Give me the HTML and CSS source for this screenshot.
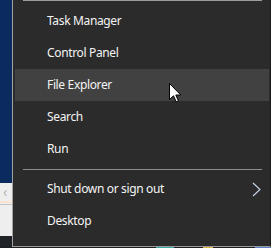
FILE: index.html
```html
<!DOCTYPE html>
<html lang="en">
<head>
    <meta charset="UTF-8">
    <title>Quick Link menu</title>
    <link rel="stylesheet" href="styles.css">
</head>
<body>
    <div class="screen">
        <!-- Bout de bureau visible à gauche -->
        <div class="side">
            <div class="side-blue"></div>
            <div class="side-window">
                <span class="side-arrow">&lsaquo;</span>
                <div class="side-line"></div>
                <div class="side-rule"></div>
            </div>
            <div class="side-taskbar"></div>
        </div>

        <!-- Menu Win+X -->
        <div class="menu">
            <div class="separator top"></div>
            <ul class="group">
                <li class="item">Task Manager</li>
                <li class="item">Control Panel</li>
                <li class="item active">File Explorer</li>
                <li class="item">Search</li>
                <li class="item">Run</li>
            </ul>
            <div class="separator mid"></div>
            <ul class="group">
                <li class="item submenu">
                    Shut down or sign out
                    <svg class="chevron" viewBox="0 0 9 15" fill="none" stroke="currentColor" stroke-width="1.1">
                        <polyline points="1,1 8,7.5 1,14"></polyline>
                    </svg>
                </li>
                <li class="item">Desktop</li>
            </ul>

            <!-- Curseur de la souris -->
            <svg class="cursor" viewBox="0 0 13 20" width="13" height="20">
                <path d="M0.5 0.5 L0.5 16.5 L4.5 12.8 L7.2 18.8 L9.4 17.8 L6.8 12 L11.8 12 Z" fill="#fff" stroke="#000" stroke-width="1" stroke-linejoin="miter"></path>
            </svg>
        </div>
    </div>
    <div class="taskbar-strip">
        <span class="tb tb-cyan"></span>
        <span class="tb tb-yellow"></span>
        <span class="tb tb-blue"></span>
    </div>
</body>
</html>
```

FILE: styles.css
```css
* {
    margin: 0;
    padding: 0;
    box-sizing: border-box;
}

body {
    width: 271px;
    height: 248px;
    overflow: hidden;
    background-color: #1e1f22;
    font-family: 'Noto Sans', 'Open Sans', sans-serif;
}

.screen {
    display: flex;
    height: 247px;
}

/* Bord gauche */
.side {
    width: 12px;
    display: flex;
    flex-direction: column;
}

.side-blue {
    height: 183px;
    background-color: #0b2b5f;
}

.side-window {
    position: relative;
    height: 53px;
    background-color: #eeeeee;
}

.side-arrow {
    position: absolute;
    left: 3px;
    top: 1px;
    font-size: 14px;
    color: #b5b5b5;
    line-height: 16px;
}

.side-line {
    margin-top: 18px;
    height: 2px;
    background-color: #fbe3cf;
}

.side-rule {
    margin-top: 1px;
    height: 1px;
    background-color: #c4c4c4;
}

.side-taskbar {
    flex: 1;
    background-color: #1f2226;
}

/* Menu */
.menu {
    position: relative;
    width: 259px;
    background-color: #2b2b2b;
    border-left: 1px solid #a3a3a3;
    border-right: 1px solid #1b1b1b;
    border-bottom: 1px solid #9a9a9a;
}

.separator {
    height: 1px;
    margin: 0 8px 0 10px;
    background-color: #8e8e8e;
}

.separator.top {
    background-color: #9c9c9c;
}

.separator.mid {
    margin-top: 4px;
    margin-bottom: 3px;
}

.group {
    list-style: none;
}

.group:first-of-type {
    padding-top: 4px;
}

.item {
    height: 32px;
    line-height: 32px;
    padding-left: 34px;
    font-size: 12px;
    letter-spacing: -0.35px;
    color: #f4f4f4;
}

.item.active {
    margin: 0 1px 0 2px;
    padding-left: 32px;
    background-color: #414141;
}

.submenu {
    display: flex;
    align-items: center;
    justify-content: space-between;
}

.chevron {
    width: 9px;
    height: 15px;
    margin-right: 9px;
    color: #c9d9ec;
}

.cursor {
    position: absolute;
    left: 156px;
    top: 83px;
}

/* Barre des taches */
.taskbar-strip {
    position: relative;
    height: 1px;
    background-color: #1e1f22;
}

.tb {
    position: absolute;
    top: 0;
    height: 1px;
}

.tb-cyan {
    left: 156px;
    width: 18px;
    background-color: #3fa9a2;
}

.tb-yellow {
    left: 203px;
    width: 10px;
    background-color: #d9b54a;
}

.tb-blue {
    left: 255px;
    width: 16px;
    background-color: #5d80c8;
}
```
